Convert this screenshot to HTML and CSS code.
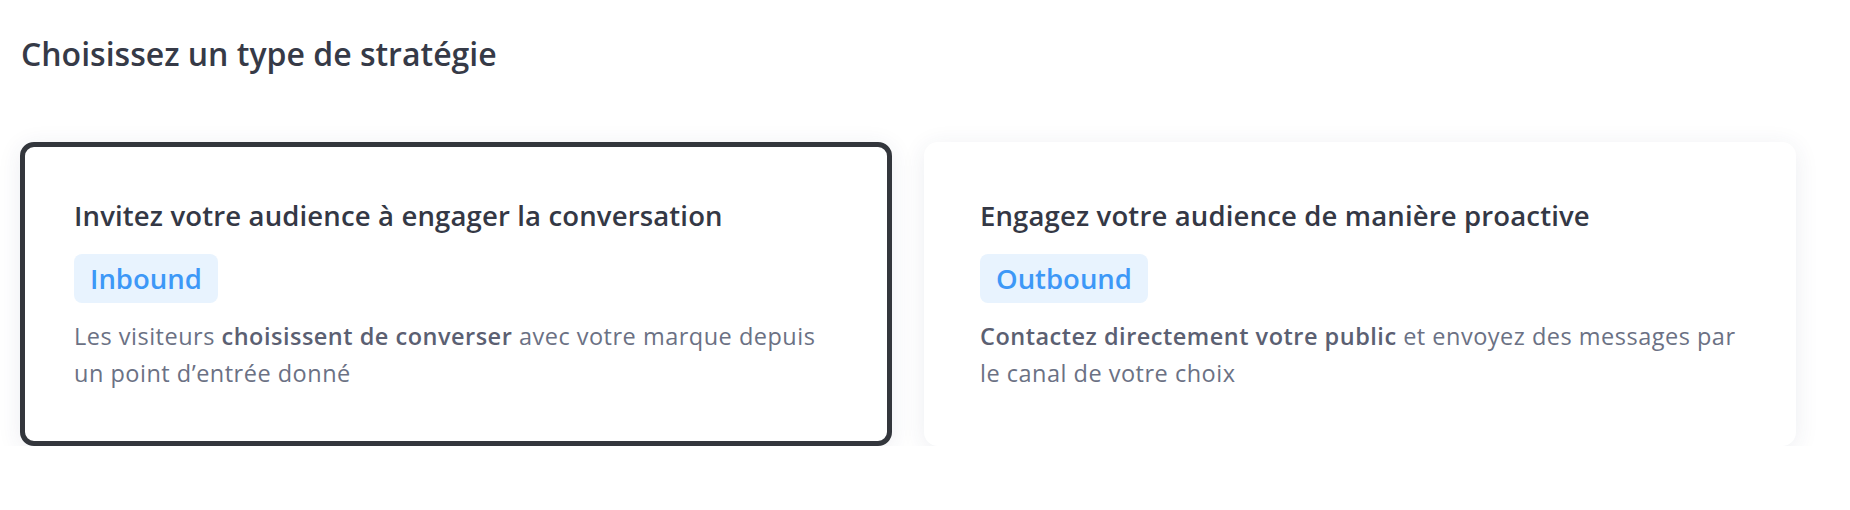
FILE: index.html
```html
<!DOCTYPE html>
<html lang="fr">
<head>
<meta charset="utf-8">
<title>Choisissez un type de stratégie</title>
<link rel="stylesheet" href="styles.css">
</head>
<body>
<main class="page">
  <h1 class="title">Choisissez un type de stratégie</h1>
  <div class="options">
    <div class="card card--selected">
      <h2 class="card-title">Invitez votre audience à engager la conversation</h2>
      <span class="badge">Inbound</span>
      <p class="card-text">Les visiteurs <strong>choisissent de converser</strong> avec votre marque depuis un point d’entrée donné</p>
    </div>
    <div class="card">
      <h2 class="card-title">Engagez votre audience de manière proactive</h2>
      <span class="badge">Outbound</span>
      <p class="card-text"><strong>Contactez directement votre public</strong> et envoyez des messages par le canal de votre choix</p>
    </div>
  </div>
</main>
</body>
</html>
```

FILE: styles.css
```css
html, body {
  margin: 0;
  padding: 0;
  background: #ffffff;
}

body {
  font-family: "Open Sans", "Liberation Sans", sans-serif;
  color: #343845;
}

.page {
  padding: 35px 54px 0 20px;
}

.title {
  margin: 0 0 69px 1px;
  font-size: 32px;
  line-height: 38px;
  font-weight: 600;
  color: #363a47;
}

.options {
  display: grid;
  grid-template-columns: 1fr 1fr;
  gap: 32px;
}

.card {
  background: #ffffff;
  border: 5px solid transparent;
  border-radius: 14px;
  padding: 52px 52px 49px 51px;
  box-shadow: 0 4px 24px rgba(40, 50, 100, 0.09);
}

.card--selected {
  border-color: #33363c;
  padding-left: 49px;
  padding-right: 54px;
}

.card-title {
  margin: 0;
  font-size: 27.5px;
  line-height: 34px;
  font-weight: 600;
  letter-spacing: 0.15px;
  color: #343845;
}

.badge {
  display: inline-block;
  margin-top: 21px;
  padding: 8px 16px;
  border-radius: 8px;
  background: #e8f3fe;
  color: #3d98f7;
  font-size: 27.5px;
  line-height: 33px;
  font-weight: 600;
}

.card-text {
  margin: 15px 0 0;
  font-size: 23.5px;
  line-height: 37px;
  letter-spacing: 0.5px;
  color: #6b7184;
}

.card-text strong {
  font-weight: 600;
  color: #5b6072;
}
```
